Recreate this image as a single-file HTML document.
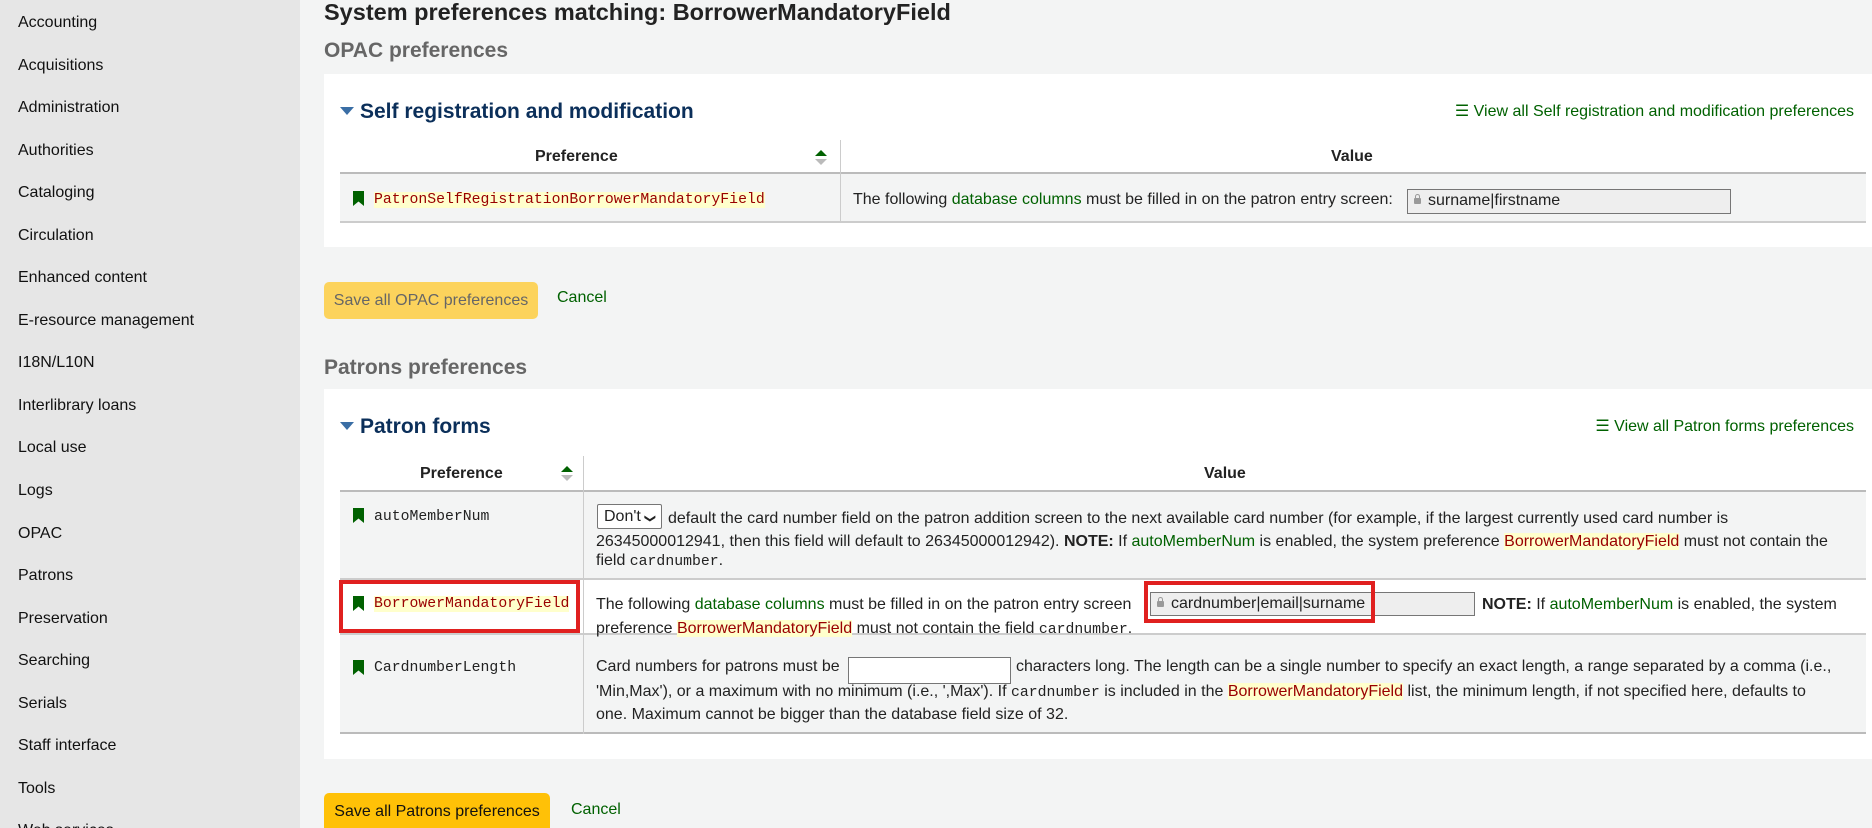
<!DOCTYPE html>
<html><head><meta charset="utf-8"><style>
*{box-sizing:border-box;margin:0;padding:0}
html{overflow:hidden;width:1872px;height:828px}
body{width:1872px;height:828px;overflow:hidden;background:#f3f4f4;font-family:"Liberation Sans",sans-serif;color:#222;position:relative;font-size:16px}
.side{position:absolute;left:0;top:0;width:300px;height:828px;background:#e6e6e6}
.side div{position:absolute;left:18px;font-size:16px;color:#111;line-height:20px}
.a{position:absolute;white-space:nowrap}
.panel{position:absolute;left:324px;width:1548px;background:#fff}
.h1{font-weight:bold;font-size:23.5px;color:#222}
.h2{font-weight:bold;font-size:21px;color:#666}
.h3{font-weight:bold;font-size:21px;color:#0b2f5a}
.tri{display:inline-block;width:0;height:0;border-left:7px solid transparent;border-right:7px solid transparent;border-top:8px solid #3a6ea5;margin-right:6px;vertical-align:3px}
.va{color:#006100;font-size:16px}
.mono{font-family:"Liberation Mono",monospace;font-size:14.8px}
.hl{background:#ffffcc;color:#990000}
.g{color:#006100}
.bm{position:absolute;width:11px;height:15px;background:#006100;clip-path:polygon(0 0,100% 0,100% 100%,50% 70%,0 100%)}
.line{position:absolute;line-height:20px;white-space:nowrap}
.inp{position:absolute;border:1px solid #767676;background:#eee;font-size:16px;line-height:22px;padding-left:20px}
.lock{position:absolute;left:6px;top:8px;width:7px;height:6px;background:#999;border-radius:1px}
.lock:before{content:"";position:absolute;left:1px;top:-4px;width:3px;height:4px;border:1px solid #999;border-bottom:none;border-radius:3px 3px 0 0}
.sort{position:absolute;width:0;height:0;border-left:6px solid transparent;border-right:6px solid transparent}
</style></head><body>
<div class="side">
<div style="top:13px">Accounting</div>
<div style="top:56px">Acquisitions</div>
<div style="top:98px">Administration</div>
<div style="top:141px">Authorities</div>
<div style="top:183px">Cataloging</div>
<div style="top:226px">Circulation</div>
<div style="top:268px">Enhanced content</div>
<div style="top:311px">E-resource management</div>
<div style="top:353px">I18N/L10N</div>
<div style="top:396px">Interlibrary loans</div>
<div style="top:438px">Local use</div>
<div style="top:481px">Logs</div>
<div style="top:524px">OPAC</div>
<div style="top:566px">Patrons</div>
<div style="top:609px">Preservation</div>
<div style="top:651px">Searching</div>
<div style="top:694px">Serials</div>
<div style="top:736px">Staff interface</div>
<div style="top:779px">Tools</div>
<div style="top:821px">Web services</div>
</div>

<div class="a h1" style="left:324px;top:-1px">System preferences matching: BorrowerMandatoryField</div>
<div class="a h2" style="left:324px;top:39px">OPAC preferences</div>

<div class="panel" style="top:74px;height:173px"></div>
<div class="a h3" style="left:340px;top:100px"><span class="tri"></span>Self registration and modification</div>
<div class="a va" style="right:18px;top:101px">☰ View all Self registration and modification preferences</div>
<div class="a" style="left:340px;top:140px;width:1526px;height:34px;border-bottom:2px solid #bbb"></div>
<div class="a" style="left:840px;top:140px;width:1px;height:83px;background:#ccc"></div>
<div class="a" style="left:340px;top:174px;width:1526px;height:49px;background:#f3f4f4;border-bottom:2px solid #ccc"></div>
<div class="a" style="left:840px;top:174px;width:1px;height:49px;background:#ccc"></div>
<div class="a" style="left:535px;top:148px;font-weight:bold">Preference</div>
<div class="sort" style="left:815px;top:150px;border-bottom:6px solid #006100"></div>
<div class="sort" style="left:815px;top:159px;border-top:6px solid #bbb"></div>
<div class="a" style="left:1331px;top:148px;font-weight:bold">Value</div>
<div class="bm" style="left:353px;top:191px"></div>
<div class="line mono" style="left:374px;top:190px"><span class="hl">PatronSelfRegistrationBorrowerMandatoryField</span></div>
<div class="line" style="left:853px;top:190px">The following <span class="g">database columns</span> must be filled in on the patron entry screen:</div>
<div class="inp" style="left:1407px;top:189px;width:324px;height:25px"><span class="lock"></span>surname|firstname</div>

<div class="a" style="left:324px;top:282px;width:214px;height:37px;background:#fcd35c;border-radius:5px;color:#666;text-align:center;line-height:37px">Save all OPAC preferences</div>
<div class="a g" style="left:557px;top:289px">Cancel</div>

<div class="a h2" style="left:324px;top:356px">Patrons preferences</div>
<div class="panel" style="top:389px;height:370px"></div>
<div class="a h3" style="left:340px;top:415px"><span class="tri"></span>Patron forms</div>
<div class="a va" style="right:18px;top:416px">☰ View all Patron forms preferences</div>
<div class="a" style="left:340px;top:456px;width:1526px;height:36px;border-bottom:2px solid #bbb"></div>
<div class="a" style="left:420px;top:465px;font-weight:bold">Preference</div>
<div class="sort" style="left:561px;top:466px;border-bottom:6px solid #006100"></div>
<div class="sort" style="left:561px;top:475px;border-top:6px solid #bbb"></div>
<div class="a" style="left:1204px;top:465px;font-weight:bold">Value</div>
<div class="a" style="left:340px;top:492px;width:1526px;height:88px;background:#f3f4f4;border-bottom:2px solid #ccc"></div>
<div class="a" style="left:340px;top:580px;width:1526px;height:55px;background:#fff;border-bottom:2px solid #ccc"></div>
<div class="a" style="left:340px;top:635px;width:1526px;height:99px;background:#f3f4f4;border-bottom:2px solid #bbb"></div>
<div class="a" style="left:583px;top:456px;width:1px;height:278px;background:#ccc"></div>

<div class="bm" style="left:353px;top:508px"></div>
<div class="line mono" style="left:374px;top:507px">autoMemberNum</div>
<div class="a" style="left:597px;top:504px;width:65px;height:25px;border:1px solid #767676;background:#fff;border-radius:2px;line-height:23px;padding-left:6px">Don't <span style="font-size:11px;display:inline-block;transform:rotate(90deg)">❯</span></div>
<div class="line" style="left:668px;top:509px">default the card number field on the patron addition screen to the next available card number (for example, if the largest currently used card number is</div>
<div class="line" style="left:596px;top:532px">26345000012941, then this field will default to 26345000012942). <b>NOTE:</b> If <span class="g">autoMemberNum</span> is enabled, the system preference <span class="hl">BorrowerMandatoryField</span> must not contain the</div>
<div class="line" style="left:596px;top:551px">field <span class="mono">cardnumber</span>.</div>

<div class="bm" style="left:353px;top:596px"></div>
<div class="line mono" style="left:374px;top:594px"><span class="hl">BorrowerMandatoryField</span></div>
<div class="line" style="left:596px;top:595px">The following <span class="g">database columns</span> must be filled in on the patron entry screen</div>
<div class="inp" style="left:1150px;top:592px;width:325px;height:24px"><span class="lock"></span>cardnumber|email|surname</div>
<div class="line" style="left:1482px;top:595px"><b>NOTE:</b> If <span class="g">autoMemberNum</span> is enabled, the system</div>
<div class="line" style="left:596px;top:619px">preference <span class="hl">BorrowerMandatoryField</span> must not contain the field <span class="mono">cardnumber</span>.</div>
<div class="a" style="left:339px;top:580px;width:241px;height:53px;border:4px solid #e0201f"></div>
<div class="a" style="left:1144px;top:581px;width:231px;height:42px;border:4px solid #e0201f"></div>

<div class="bm" style="left:353px;top:660px"></div>
<div class="line mono" style="left:374px;top:658px">CardnumberLength</div>
<div class="line" style="left:596px;top:657px">Card numbers for patrons must be</div>
<div class="a" style="left:848px;top:657px;width:163px;height:27px;border:1px solid #767676;background:#fff"></div>
<div class="line" style="left:1016px;top:657px">characters long. The length can be a single number to specify an exact length, a range separated by a comma (i.e.,</div>
<div class="line" style="left:596px;top:682px">'Min,Max'), or a maximum with no minimum (i.e., ',Max'). If <span class="mono">cardnumber</span> is included in the <span class="hl">BorrowerMandatoryField</span> list, the minimum length, if not specified here, defaults to</div>
<div class="line" style="left:596px;top:705px">one. Maximum cannot be bigger than the database field size of 32.</div>

<div class="a" style="left:324px;top:793px;width:226px;height:35px;background:#ffc107;border-radius:5px 5px 0 0;color:#111;text-align:center;line-height:38px">Save all Patrons preferences</div>
<div class="a g" style="left:571px;top:801px">Cancel</div>
</body></html>
